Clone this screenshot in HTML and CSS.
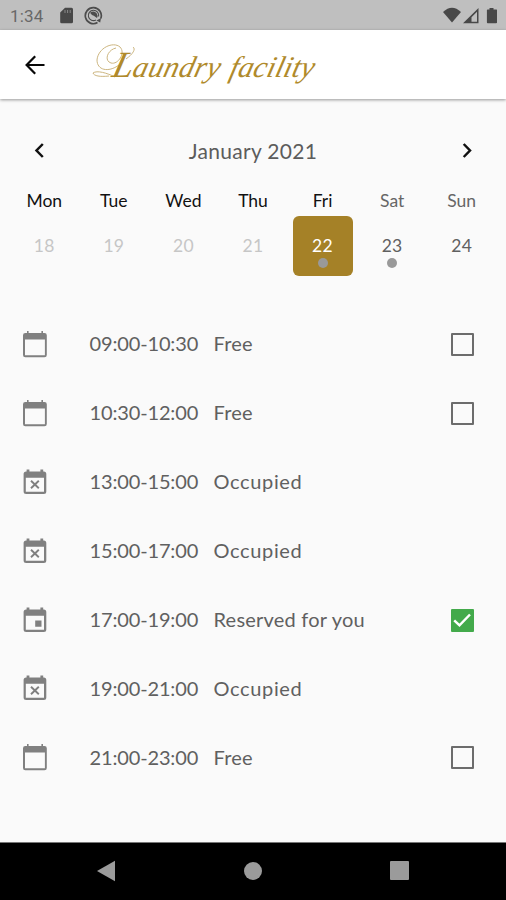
FILE: index.html
```html
<!DOCTYPE html>
<html lang="en">
<head>
<meta charset="utf-8">
<title>Laundry facility</title>
<link rel="stylesheet" href="styles.css">
</head>
<body>
<svg class="defs" width="0" height="0">
  <symbol id="cal" viewBox="0 0 26 29"><path fill="currentColor" fill-rule="evenodd" d="M5 1h1.600V3h12.800V1H21V3h1.500q2.300 0 2.300 2.300V25q0 2.300-2.300 2.300H3.300Q1 27.300 1 25V5.300Q1 3 3.300 3H5zM3 9.500v15.800h19.900V9.500z"/></symbol>
  <symbol id="busy" viewBox="0 0 26 29"><path fill="currentColor" fill-rule="evenodd" d="M4.600 1.500h2.800V3.600h11V1.500h2.800V3.600h.6q2.500 0 2.500 2.500V23.500q0 2.500-2.500 2.500H4.100q-2.500 0-2.500-2.500V6.100q0-2.500 2.500-2.500h.5zM3.800 9.700v14H22v-14z"/><path fill="none" stroke="currentColor" stroke-width="1.900" d="M9 12.800l7.800 7.400M16.800 12.800L9 20.200"/></symbol>
  <symbol id="mine" viewBox="0 0 26 29"><path fill="currentColor" fill-rule="evenodd" d="M4.600 1.500h2.800V3.600h11V1.500h2.800V3.600h.6q2.500 0 2.500 2.500V23.500q0 2.500-2.500 2.500H4.100q-2.500 0-2.500-2.500V6.100q0-2.500 2.500-2.500h.5zM3.800 9.700v14H22v-14zM13.200 14.500h6.300v6.300h-6.300z"/></symbol>
</svg>
<div class="phone">
  <div class="status">
    <span class="clock">1:34</span>
    <svg class="sd" width="14" height="17" viewBox="0 0 14 17"><path fill="#484848" d="M5 .8h6.500Q13 .8 13 2.300v12.400q0 1.500-1.500 1.500h-10Q.2 16.200.2 14.700V5.600z"/><path stroke="#888" stroke-width="1" d="M5 3v3M7.600 3v3M10.200 3v3"/></svg>
    <svg class="sync" width="19" height="19" viewBox="0 0 19 19" fill="none" stroke="#4c4c4c"><path stroke-width="1.700" d="M13.500 16.500A8 8 0 1 1 16.800 12.500"/><path stroke-width="1.100" d="M12 14A5.200 5.200 0 1 1 14.600 10.500"/><path fill="#4c4c4c" stroke="none" d="M6 6.700q4-2.500 6.800.7 1.600 2.400.2 4.600L9.800 9.800q-1.600 0-3.800-3.100zM12.500 14.500l4.500-2.500-.8 4.500z"/></svg>
    <svg class="signals" width="54" height="18" viewBox="0 0 54 18"><path fill="#484848" d="M0 5Q9-3.500 18 5L9 15.500z"/><path fill="#484848" fill-rule="evenodd" d="M35.500 1v15.200H20zM34 4.800L28.500 10.300V14.800H34z"/><path fill="#484848" d="M46.500 1h4v1.500h2.800q.8 0 .8.800v12q0 .9-.9.900h-8.500q-.8 0-.8-.9v-12q0-.8.8-.8h1.800z"/></svg>
  </div>
  <header class="bar">
    <svg class="back" width="20" height="20" viewBox="0 0 20 20"><path fill="none" stroke="#080808" stroke-width="2.200" d="M19.500 10H2M10.200 1.200L1.600 10l8.600 8.800"/></svg>
    <h1 class="title"><svg class="swash" width="50" height="42" viewBox="0 0 50 42"><path d="M27 22C16 30 5 27 5 17 6 5 21-2 28 4c6 6-2 18-9 16-7-2-4-13 5-15M17 33C8 34 2 33 1 30c4-3 14 0 22 4M34 16c7-5 10-10 7-12"/></svg><span class="cap">L</span><span class="word">aundry</span> <span class="word second">facility</span></h1>
  </header>
  <main>
    <div class="month">
      <svg width="10" height="16" viewBox="0 0 10 16"><path d="M8.800 2L2.500 8.500l6.300 6.500"/></svg>
      <h2>January 2021</h2>
      <svg width="10" height="16" viewBox="0 0 10 16"><path d="M1.700 2L8 8.500l-6.300 6.500"/></svg>
    </div>
    <div class="week names"><span>Mon</span><span>Tue</span><span>Wed</span><span>Thu</span><span>Fri</span><span class="rest">Sat</span><span class="rest">Sun</span></div>
    <div class="week days">
      <span class="day past">18</span><span class="day past">19</span><span class="day past">20</span><span class="day past">21</span>
      <span class="day chosen">22<i class="dot"></i></span><span class="day">23<i class="dot"></i></span><span class="day">24</span>
    </div>
    <ul class="slots">
      <li><svg class="ico"><use href="#cal"/></svg><span class="time">09:00-10:30</span><span class="state">Free</span><i class="box"></i></li>
      <li><svg class="ico"><use href="#cal"/></svg><span class="time">10:30-12:00</span><span class="state">Free</span><i class="box"></i></li>
      <li><svg class="ico"><use href="#busy"/></svg><span class="time">13:00-15:00</span><span class="state wide">Occupied</span></li>
      <li><svg class="ico"><use href="#busy"/></svg><span class="time">15:00-17:00</span><span class="state wide">Occupied</span></li>
      <li><svg class="ico"><use href="#mine"/></svg><span class="time">17:00-19:00</span><span class="state">Reserved for you</span><i class="box on"><svg width="22" height="22" viewBox="0 0 22 22"><path d="M3.200 11.300l5.300 5L19 5.500"/></svg></i></li>
      <li><svg class="ico"><use href="#busy"/></svg><span class="time">19:00-21:00</span><span class="state wide">Occupied</span></li>
      <li><svg class="ico"><use href="#cal"/></svg><span class="time">21:00-23:00</span><span class="state">Free</span><i class="box"></i></li>
    </ul>
  </main>
  <nav class="nav">
    <svg width="18" height="22" viewBox="0 0 18 22"><path d="M0 11L18 .8v20.400z"/></svg>
    <svg width="18" height="18" viewBox="0 0 18 18"><circle cx="9" cy="9" r="9"/></svg>
    <svg width="19" height="19" viewBox="0 0 19 19"><rect width="19" height="19" rx="1"/></svg>
  </nav>
</div>
</body>
</html>
```
FILE: styles.css
```css
* { box-sizing: border-box; }
body { margin: 0; background: #fafafa; font-family: Lato, "Liberation Sans", sans-serif; }
h1, h2, ul { margin: 0; padding: 0; font-weight: 400; }
.defs { position: absolute; }
.phone { width: 506px; height: 900px; display: flex; flex-direction: column; overflow: hidden; background: #fafafa; }
.status { height: 30px; flex: none; display: flex; align-items: center; padding: 1px 9px 0 10px; background: #bfbfbf; }
.clock { width: 50px; font: 17px/30px Roboto, sans-serif; color: #686868; letter-spacing: .2px; }
.sync { margin-left: 10px; }
.signals { margin-left: auto; }
.bar { height: 69px; flex: none; display: flex; align-items: center; padding-left: 25px; background: #fff; box-shadow: 0 1px 3px rgba(0,0,0,.4); z-index: 1; }
.title { position: relative; display: flex; align-items: baseline; margin-left: 53px; padding: 2px 0 0 12px; font: italic 30px/60px "Liberation Serif", serif; color: #b08a2b; white-space: nowrap; }
.swash { position: absolute; left: -6px; top: 10px; fill: none; stroke: #cdb680; stroke-width: 1; }
.cap { font-size: 37px; width: 20px; }
.cap, .word { transform: skewX(-14deg); transform-origin: 0 75%; }
.word { letter-spacing: .4px; }
.second { margin-left: 10px; letter-spacing: .1px; }
.month { height: 102px; display: flex; align-items: center; justify-content: space-between; padding: 0 34px; }
.month svg { fill: none; stroke: #111; stroke-width: 2.5; }
.month h2 { font-size: 21px; letter-spacing: .3px; color: #5c5c5c; }
.week { display: grid; grid-template-columns: repeat(7, 1fr); padding: 0 9.500px; text-align: center; }
.names { height: 15px; line-height: 0; font-size: 17.500px; color: #111; }
.names .rest { color: #666; }
.days { height: 60px; justify-items: center; }
.day { position: relative; width: 60px; height: 60px; line-height: 59px; font-size: 17.500px; letter-spacing: .3px; border-radius: 6px; color: #606060; }
.past { color: #c6c6c6; }
.chosen { background: #a58127; color: #fff; }
.dot { position: absolute; left: 25px; top: 42px; width: 10px; height: 10px; border-radius: 50%; background: #999; }
.slots { list-style: none; margin-top: 34px; }
.slots li { height: 68.900px; display: flex; align-items: center; padding: 0 32px 0 22px; font-size: 20px; color: #606060; }
.ico { width: 26px; height: 29px; flex: none; color: #808080; }
.time { width: 124px; margin-left: 41.500px; letter-spacing: -.15px; white-space: nowrap; }
.time, .state { padding-bottom: 2px; }
.state { letter-spacing: .22px; }
.wide { letter-spacing: .65px; }
.box { margin-left: auto; width: 23px; height: 23px; border: 2px solid #6c6c6c; border-radius: 1px; }
.on { border: 0; background: #43aa4b; }
.on svg { display: block; fill: none; stroke: #fff; stroke-width: 2.500; }
.nav { height: 58px; margin-top: auto; flex: none; display: flex; align-items: center; justify-content: space-between; padding: 0 97px 2px; background: #000; border-top: 1px solid #777; }
.nav svg { fill: #9b9b9b; }
```
